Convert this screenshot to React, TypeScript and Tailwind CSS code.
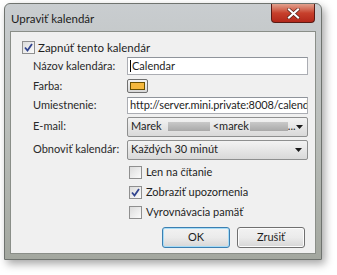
import React from "react";

const Check = ({ checked }: { checked?: boolean }) => (
  <span className="flex h-[13px] w-[13px] shrink-0 items-center justify-center border border-[#8f8f8f] bg-gradient-to-br from-[#dcdcdc] to-[#fbfbfb]">
    {checked && (
      <svg width="9" height="9" viewBox="0 0 9 9">
        <path d="M1 4.5 L3.5 7.5 L8 1" fill="none" stroke="#31448f" strokeWidth="1.8" />
      </svg>
    )}
  </span>
);

const Arrow = () => (
  <svg width="7" height="4" viewBox="0 0 7 4" className="ml-auto shrink-0">
    <path d="M0 0 H7 L3.5 4 Z" fill="#1a1a1a" />
  </svg>
);

const Label = ({ children }: { children: React.ReactNode }) => (
  <div className="flex items-center whitespace-nowrap text-[#2a2a2a]">{children}</div>
);

export default function App() {
  return (
    <div
      className="h-[275px] w-[337px] bg-white pl-[4px] pt-[3px] text-[11px]"
      style={{ fontFamily: 'Lato, "Open Sans", sans-serif' }}
    >
      <div className="flex h-[257px] w-[318px] flex-col rounded-t-[6px] border border-[#6f736f] bg-gradient-to-b from-[#c9cdd0] via-[#b9bdb9] to-[#a3a79f] px-[5px] pb-[5px] shadow-[3px_4px_8px_rgba(0,0,0,0.35)]">
        <div className="flex h-[27px] items-start">
          <span className="mt-[6px] pl-[1px] text-[11.5px] text-[#1c1c1c]">Upraviť kalendár</span>
          <div className="ml-auto mr-[1px] flex h-[19px] w-[44px] items-center justify-center rounded-b-[4px] border border-t-0 border-[#5a1a14] bg-gradient-to-b from-[#e0a08e] via-[#c7402c] to-[#b3271a]">
            <svg width="13" height="11" viewBox="0 0 13 11">
              <path d="M2 1.5 L11 9.5 M11 1.5 L2 9.5" stroke="#4a1a12" strokeWidth="3.4" strokeLinecap="square" />
              <path d="M2 1.5 L11 9.5 M11 1.5 L2 9.5" stroke="#ffffff" strokeWidth="2.2" strokeLinecap="square" />
            </svg>
          </div>
        </div>
        <div className="flex flex-1 flex-col border border-[#8a8e88] bg-[#f0f0f0] pl-[11px] pr-[9px] pt-[9px]">
          <div className="flex h-[13px] items-center gap-[3px]">
            <Check checked />
            <span className="text-[11.5px] text-[#1e1e1e]">Zapnúť tento kalendár</span>
          </div>
          <div className="mt-[3px] grid grid-cols-[94px_181px] pl-[11px]">
            <Label>Názov kalendára:</Label>
            <div className="flex h-[18px] min-w-0 items-center border border-[#abadb3] border-t-[#8f949b] bg-white pl-[2px]">
              <span className="mr-[1px] h-[12px] w-px bg-black" />
              <span className="text-[#1e1e1e]">Calendar</span>
            </div>
            <div className="h-[3px]" />
            <div className="h-[3px]" />
            <Label>Farba:</Label>
            <div className="flex h-[16px] items-center">
              <div className="flex h-[14px] w-[21px] items-center justify-center rounded-[2px] border border-[#707070] bg-gradient-to-b from-[#f4f4f4] to-[#d8d8d8]">
                <div className="h-[8px] w-[15px] border border-[#6a5000] bg-[#f5b83d]" />
              </div>
            </div>
            <div className="h-[2px]" />
            <div className="h-[2px]" />
            <Label>Umiestnenie:</Label>
            <div className="flex h-[17px] min-w-0 items-center overflow-hidden whitespace-nowrap border border-[#abadb3] border-t-[#8f949b] bg-white pl-[2px] tracking-[-0.1px] text-[#1e1e1e]">
              http://server.mini.private:8008/calend
            </div>
            <div className="h-[3px]" />
            <div className="h-[3px]" />
            <Label>E-mail:</Label>
            <div className="flex h-[20px] min-w-0 items-center overflow-hidden whitespace-nowrap rounded-[2px] border border-[#8e8f8f] bg-gradient-to-b from-[#f3f3f3] via-[#e6e6e6] to-[#d9d9d9] pl-[3px] pr-[5px] text-[#1e1e1e]">
              <span>Marek</span>
              <span className="ml-[6px] h-[9px] w-[42px] shrink-0 bg-gradient-to-b from-[#c9c9c9] to-[#a9a9a9]" />
              <span className="ml-[3px]">&lt;marek</span>
              <span className="ml-[1px] h-[9px] w-[38px] shrink-0 bg-gradient-to-b from-[#c9c9c9] to-[#a9a9a9]" />
              <span>...</span>
              <Arrow />
            </div>
            <div className="h-[3px]" />
            <div className="h-[3px]" />
            <Label>Obnoviť kalendár:</Label>
            <div className="flex h-[20px] min-w-0 items-center rounded-[2px] border border-[#8e8f8f] bg-gradient-to-b from-[#f3f3f3] via-[#e6e6e6] to-[#d9d9d9] pl-[3px] pr-[5px] text-[#1e1e1e]">
              <span>Každých 30 minút</span>
              <Arrow />
            </div>
          </div>
          <div className="mt-[3px] flex flex-col pl-[107px] text-[#1e1e1e]">
            <div className="flex h-[20px] items-center gap-[4px]">
              <Check />
              <span>Len na čítanie</span>
            </div>
            <div className="flex h-[20px] items-center gap-[4px]">
              <Check checked />
              <span>Zobraziť upozornenia</span>
            </div>
            <div className="flex h-[20px] items-center gap-[4px]">
              <Check />
              <span>Vyrovnávacia pamäť</span>
            </div>
          </div>
          <div className="mt-[4px] flex justify-end gap-[7px] pr-[1px] text-[#1e1e1e]">
            <button className="flex h-[21px] w-[68px] items-center justify-center rounded-[3px] border border-[#3c7fb1] bg-gradient-to-b from-[#f2f2f2] via-[#ebebeb] to-[#d6d6d6] shadow-[inset_0_0_0_1px_#a6dcf7]">
              OK
            </button>
            <button className="flex h-[21px] w-[68px] items-center justify-center rounded-[3px] border border-[#707070] bg-gradient-to-b from-[#f2f2f2] via-[#ebebeb] to-[#d6d6d6] shadow-[inset_0_0_0_1px_#fcfcfc]">
              Zrušiť
            </button>
          </div>
        </div>
      </div>
    </div>
  );
}
